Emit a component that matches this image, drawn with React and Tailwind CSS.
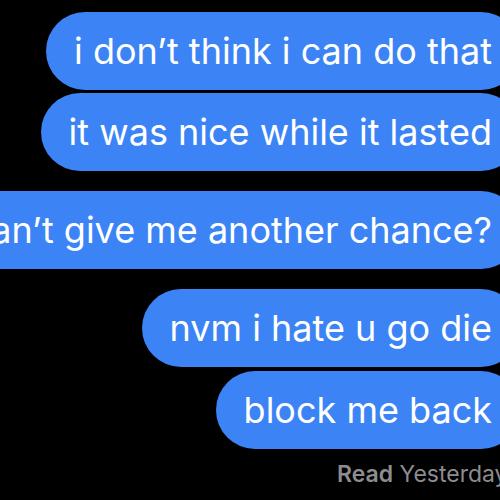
import React from "react";

const messages = [
  { text: "i don\u2019t think i can do that", gap: "mt-0" },
  { text: "it was nice while it lasted", gap: "mt-[3px]" },
  { text: "can\u2019t give me another chance?", gap: "mt-[20px]" },
  { text: "nvm i hate u go die", gap: "mt-[20px]" },
  { text: "block me back", gap: "mt-[4px]" },
];

const Bubble = ({ text, className }) => (
  <div
    className={`${className} shrink-0 mr-[-20px] h-[78px] px-[28px] flex items-center rounded-full bg-[#3c84f5] text-white whitespace-nowrap text-[36px]`}
  >
    {text}
  </div>
);

export default function App() {
  return (
    <div
      className="w-[500px] h-[500px] bg-black overflow-hidden flex flex-col items-end pt-[12px]"
      style={{ fontFamily: "Inter, 'Liberation Sans', sans-serif" }}
    >
      {messages.map((m, i) => (
        <Bubble key={i} text={m.text} className={m.gap} />
      ))}
      <div className="mt-[8px] self-start ml-[337px] whitespace-nowrap text-[23px] text-[#8c8c91]">
        <span className="font-semibold">Read</span> Yesterday
      </div>
    </div>
  );
}
